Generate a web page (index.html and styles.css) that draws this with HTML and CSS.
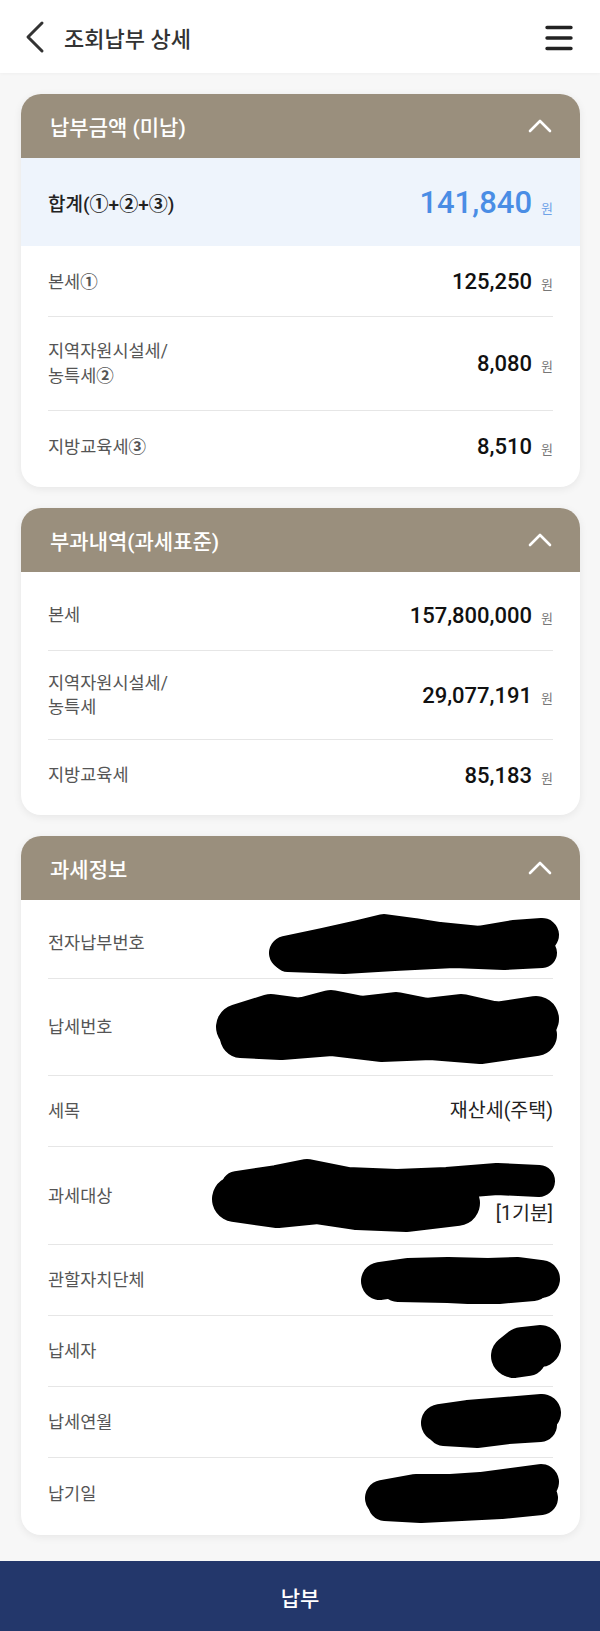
FILE: index.html
```html
<!DOCTYPE html>
<html lang="ko">
<head>
<meta charset="utf-8">
<title>조회납부 상세</title>
<link rel="stylesheet" href="styles.css">
</head>
<body>
<header class="topbar">
  <svg class="back" width="20" height="34" viewBox="0 0 20 34"><path d="M17 3 L3 17 L17 31" fill="none" stroke="#333" stroke-width="3" stroke-linecap="round" stroke-linejoin="round"/></svg>
  <h1 class="title">조회납부 상세</h1>
  <svg class="menu" width="28" height="26" viewBox="0 0 28 26"><path d="M2 2.5 H26 M2 13 H26 M2 23.5 H26" stroke="#222" stroke-width="3.4" stroke-linecap="round"/></svg>
</header>

<main class="content">
  <section class="card">
    <div class="card-head"><span>납부금액 (미납)</span><svg width="24" height="14" viewBox="0 0 24 14"><path d="M2 12 L12 2 L22 12" fill="none" stroke="#fff" stroke-width="2.6" stroke-linecap="round" stroke-linejoin="round"/></svg></div>
    <div class="sum-row"><span class="sum-label">합계(<span class="circ">①</span>+<span class="circ">②</span>+<span class="circ">③</span>)</span><span class="sum-val">141,840<span class="won blue">원</span></span></div>
    <div class="card-body first">
      <div class="row"><span class="label">본세<span class="circ">①</span></span><span class="amt">125,250<span class="won">원</span></span></div>
      <div class="row two tall"><span class="label">지역자원시설세/<br>농특세<span class="circ">②</span></span><span class="amt">8,080<span class="won">원</span></span></div>
      <div class="row"><span class="label">지방교육세<span class="circ">③</span></span><span class="amt">8,510<span class="won">원</span></span></div>
    </div>
  </section>

  <section class="card">
    <div class="card-head"><span>부과내역(과세표준)</span><svg width="24" height="14" viewBox="0 0 24 14"><path d="M2 12 L12 2 L22 12" fill="none" stroke="#fff" stroke-width="2.6" stroke-linecap="round" stroke-linejoin="round"/></svg></div>
    <div class="card-body">
      <div class="row"><span class="label">본세</span><span class="amt">157,800,000<span class="won">원</span></span></div>
      <div class="row two"><span class="label">지역자원시설세/<br>농특세</span><span class="amt">29,077,191<span class="won">원</span></span></div>
      <div class="row"><span class="label">지방교육세</span><span class="amt">85,183<span class="won">원</span></span></div>
    </div>
  </section>

  <section class="card">
    <div class="card-head"><span>과세정보</span><svg width="24" height="14" viewBox="0 0 24 14"><path d="M2 12 L12 2 L22 12" fill="none" stroke="#fff" stroke-width="2.6" stroke-linecap="round" stroke-linejoin="round"/></svg></div>
    <div class="card-body last">
      <div class="row"><span class="label">전자납부번호</span>
        <svg class="blob" width="299" height="61" viewBox="0 0 299 61"><g fill="none" stroke="#000" stroke-linecap="round" stroke-linejoin="round"><path d="M22 40 L60 32 L95 24 L120 18 L150 22 L175 26 L215 30 L250 24 L278 22" stroke-width="34"/><path d="M24 44 L80 46 L130 43 L190 40 L240 42 L278 40" stroke-width="30"/></g></svg>
      </div>
      <div class="row loose"><span class="label">납세번호</span>
        <svg class="blob" width="352" height="76" viewBox="0 0 352 76"><g fill="none" stroke="#000" stroke-linecap="round" stroke-linejoin="round"><path d="M28 38 L60 28 L90 32 L120 24 L150 30 L185 26 L215 32 L250 28 L285 36 L325 30" stroke-width="46"/><path d="M30 48 L70 50 L120 46 L170 52 L220 50 L270 54 L325 46" stroke-width="42"/></g></svg>
      </div>
      <div class="row"><span class="label">세목</span><span class="val">재산세(주택)</span></div>
      <div class="row loose"><span class="label">과세대상</span>
        <div class="addr">
          <span class="val">[1기분]</span>
          <svg class="blob over" width="356" height="77" viewBox="0 0 356 77"><g fill="none" stroke="#000" stroke-linecap="round" stroke-linejoin="round"><path d="M28 42 L70 48 L110 44 L150 50 L200 52 L250 46" stroke-width="46"/><path d="M30 30 L70 24 L100 18 L140 26 L190 28 L240 26 L290 22 L332 24" stroke-width="32"/></g></svg>
        </div>
      </div>
      <div class="row"><span class="label">관할자치단체</span>
        <svg class="blob" width="205" height="47" viewBox="0 0 205 47"><g fill="none" stroke="#000" stroke-linecap="round" stroke-linejoin="round"><path d="M22 24 L50 20 L90 19 L130 20 L160 19 L183 22" stroke-width="38"/><path d="M40 27 L90 28 L130 30 L175 26" stroke-width="36"/></g></svg>
      </div>
      <div class="row"><span class="label">납세자</span>
        <svg class="blob" width="75" height="54" viewBox="0 0 75 54"><g fill="none" stroke="#000" stroke-linecap="round" stroke-linejoin="round"><path d="M24 32 L34 24 L52 22" stroke-width="42"/><path d="M26 36 L40 34" stroke-width="36"/></g></svg>
      </div>
      <div class="row"><span class="label">납세연월</span>
        <svg class="blob" width="145" height="59" viewBox="0 0 145 59"><g fill="none" stroke="#000" stroke-linecap="round" stroke-linejoin="round"><path d="M22 30 L50 26 L75 24 L100 22 L124 20" stroke-width="38"/><path d="M26 36 L60 38 L90 34 L122 32" stroke-width="34"/></g></svg>
      </div>
      <div class="row"><span class="label">납기일</span>
        <svg class="blob" width="202" height="63" viewBox="0 0 202 63"><g fill="none" stroke="#000" stroke-linecap="round" stroke-linejoin="round"><path d="M22 36 L55 30 L90 30 L120 28 L150 24 L180 20" stroke-width="36"/><path d="M24 42 L60 44 L100 42 L140 40 L180 36" stroke-width="34"/></g></svg>
      </div>
    </div>
  </section>
</main>

<footer class="pay-bar">납부</footer>
</body>
</html>
```

FILE: styles.css
```css
* { box-sizing: border-box; }

body {
  margin: 0;
  background: #f7f7f7;
  font-family: Roboto, "Noto Sans CJK KR", sans-serif;
  color: #222;
}

.topbar {
  height: 73px;
  background: #fff;
  display: flex;
  align-items: center;
  padding: 0 27px 0 25px;
  box-shadow: 0 1px 3px rgba(0, 0, 0, 0.03);
}

.back { flex: none; }

.title {
  margin: 0 0 0 19px;
  font-size: 22px;
  font-weight: 500;
  color: #333;
  flex: 1;
}

.menu { flex: none; margin-top: 2px; }

.content {
  padding: 21px 20px 26px 21px;
  display: flex;
  flex-direction: column;
  gap: 21px;
}

.card {
  background: #fff;
  border-radius: 20px;
  overflow: hidden;
  box-shadow: 0 2px 8px rgba(0, 0, 0, 0.07);
}

.card-head {
  height: 64px;
  background: #9a8f7d;
  color: #fff;
  display: flex;
  align-items: center;
  justify-content: space-between;
  padding: 0 28px 0 29px;
  font-size: 21px;
  font-weight: 500;
}

.sum-row {
  height: 88px;
  background: #eef4fc;
  display: flex;
  align-items: center;
  justify-content: space-between;
  padding: 0 27px;
}

.sum-label {
  font-size: 19px;
  font-weight: 500;
  color: #222;
}

.sum-val {
  font-size: 31px;
  font-weight: 500;
  color: #4a8de5;
}

.circ {
  font-family: "Noto Sans CJK KR", sans-serif;
  font-weight: 700;
}

.card-body {
  padding: 8px 27px 5px;
}

.card-body.first { padding-top: 0; padding-bottom: 6px; }
.card-body.last { padding-bottom: 6px; }

.row {
  display: flex;
  align-items: center;
  justify-content: space-between;
  min-height: 70px;
  padding: 4px 0;
}

.row + .row { border-top: 1px solid #e6e6e6; min-height: 71px; }

.row.two { padding: 20px 0; }
.row.two.tall { padding: 22px 0; }
.row.loose { padding: 10px 0; }

.label {
  font-size: 17.5px;
  line-height: 24px;
  color: #555;
}

.amt {
  font-size: 22px;
  font-weight: 500;
  color: #111;
}

.won {
  font-size: 13px;
  font-weight: 400;
  color: #777;
  margin-left: 9px;
}

.won.blue { color: #6fa2e8; }

.val {
  font-size: 19.5px;
  line-height: 24px;
  color: #222;
}

.blob {
  display: block;
  flex: none;
  margin-right: -10px;
}

.addr {
  position: relative;
  width: 346px;
  height: 77px;
  display: flex;
  flex-direction: column;
  justify-content: flex-end;
  align-items: flex-end;
  padding-bottom: 8px;
}

.blob.over {
  position: absolute;
  left: 0;
  top: 0;
  margin-right: 0;
}

.pay-bar {
  height: 71px;
  background: #23376b;
  color: #fff;
  display: flex;
  align-items: center;
  justify-content: center;
  font-size: 21px;
  font-weight: 500;
}
```
